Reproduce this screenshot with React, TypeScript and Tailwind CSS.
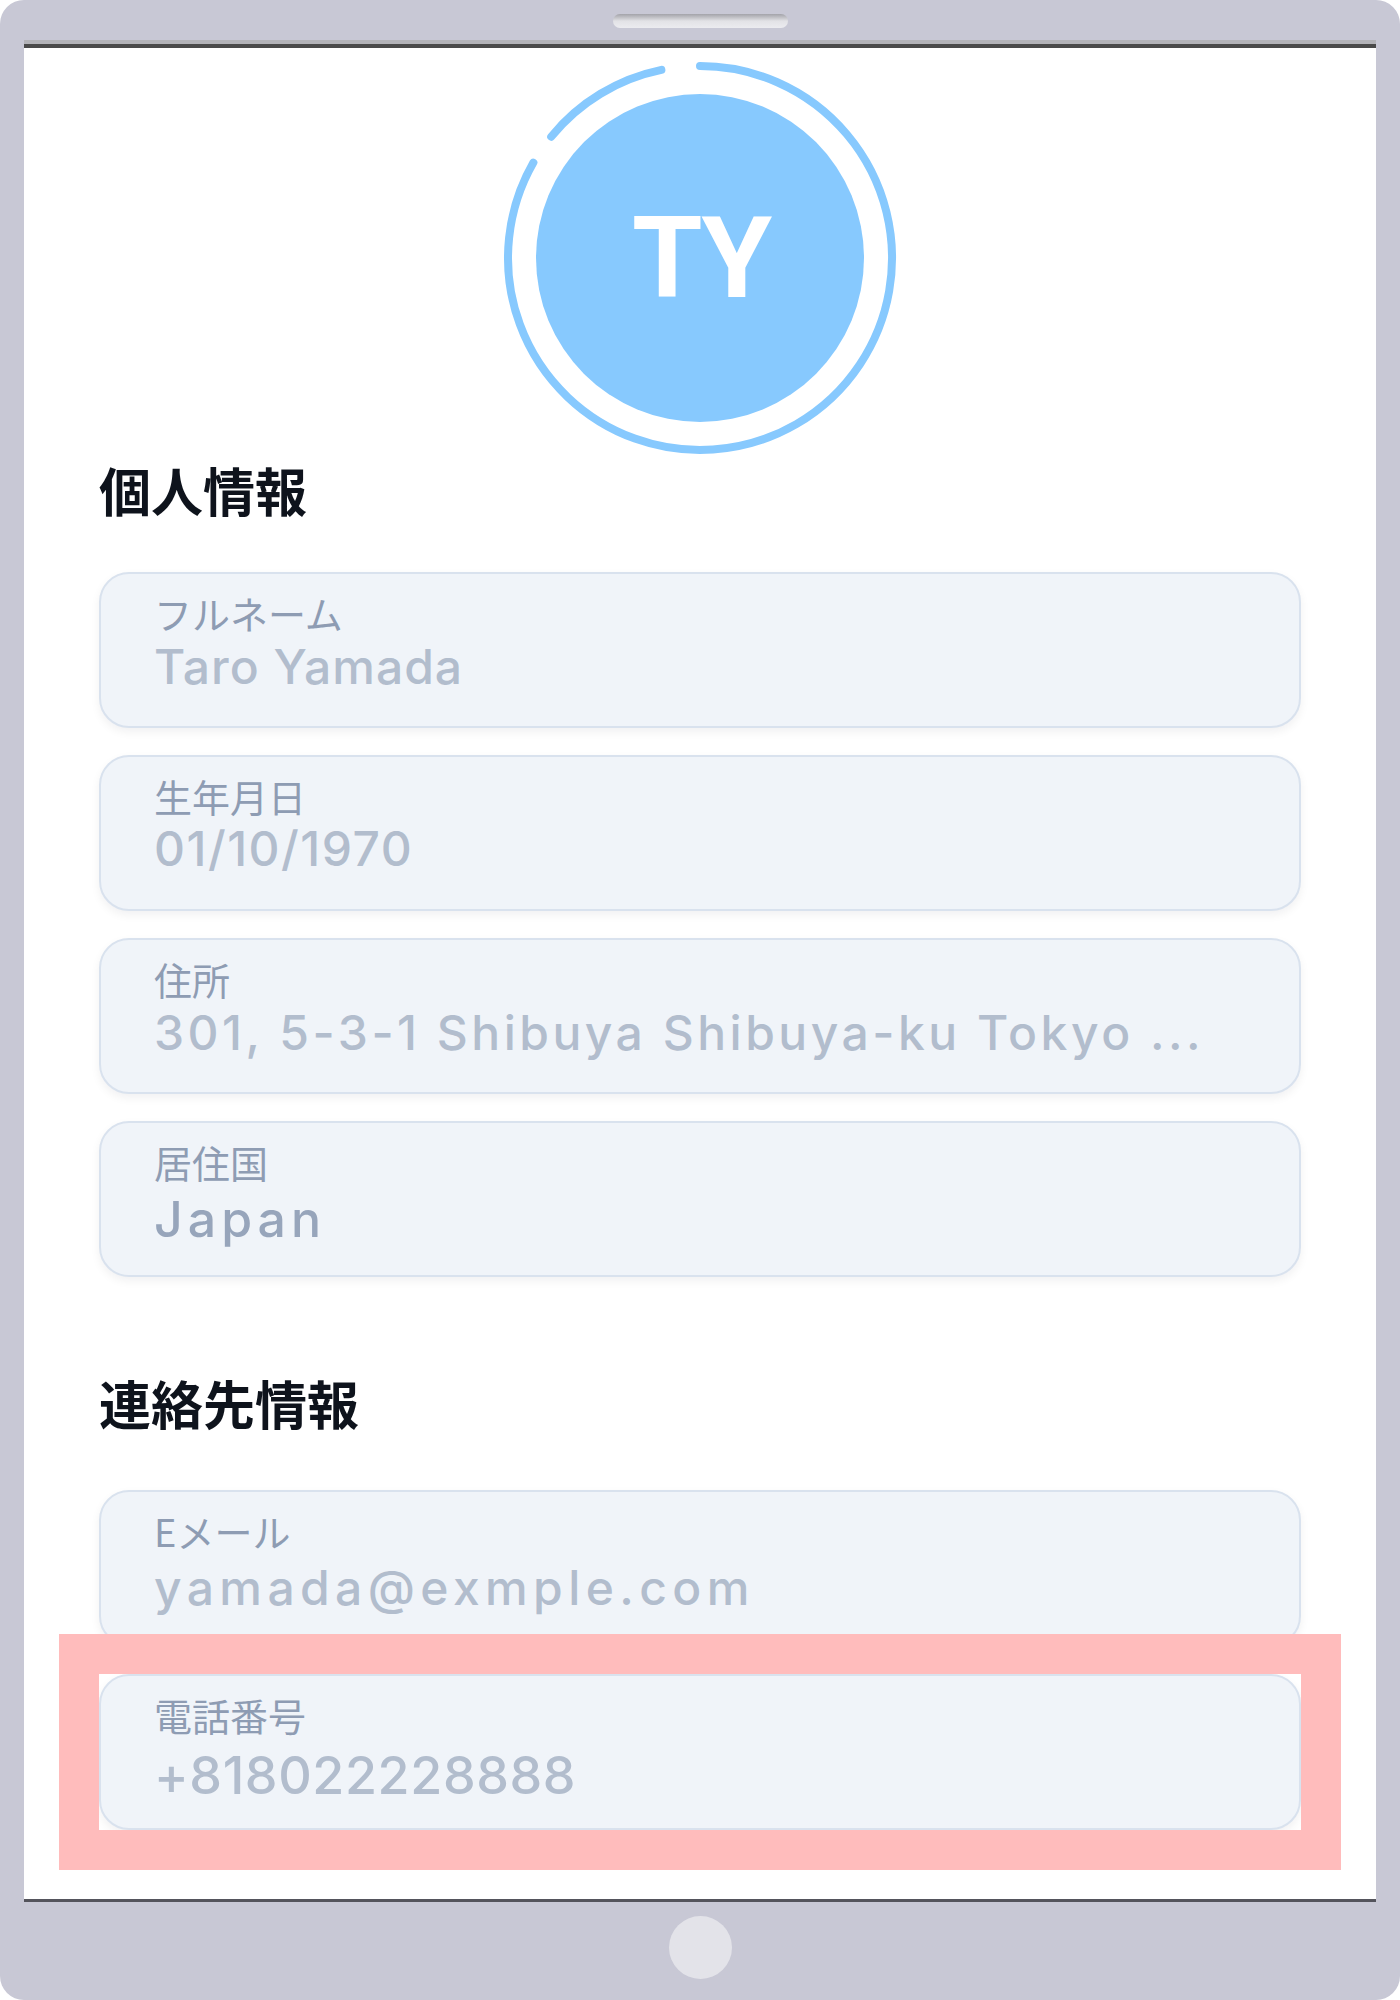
import React from 'react'

type Field = {
    label: string
    value: string
    valueClass: string
}

const personal: Field[] = [
    {
        label: 'フルネーム',
        value: 'Taro Yamada',
        valueClass: 'text-[48px] leading-[56px] mt-[4px] tracking-[1px] text-[#b2bdcd]',
    },
    {
        label: '生年月日',
        value: '01/10/1970',
        valueClass: 'text-[48px] leading-[56px] mt-[3px] tracking-[1.5px] text-[#b2bdcd]',
    },
    {
        label: '住所',
        value: '301, 5-3-1 Shibuya Shibuya-ku Tokyo ...',
        valueClass: 'text-[48px] leading-[56px] mt-[4px] tracking-[3.5px] text-[#b2bdcd] whitespace-nowrap',
    },
    {
        label: '居住国',
        value: 'Japan',
        valueClass: 'text-[50px] leading-[56px] mt-[7px] tracking-[5px] text-[#97a5bb]',
    },
]

const contact: Field[] = [
    {
        label: 'Eメール',
        value: 'yamada@exmple.com',
        valueClass: 'text-[48px] leading-[56px] mt-[7px] tracking-[5.4px] text-[#b2bdcd]',
    },
    {
        label: '電話番号',
        value: '+818022228888',
        valueClass: 'text-[52px] leading-[56px] mt-[11px] tracking-[0.6px] text-[#b2bdcd]',
    },
]

function InfoField({ field }: { field: Field }) {
    return (
        <div className="h-[156px] rounded-[30px] border-2 border-[#d9e2ee] bg-[#f0f4f9] pl-[53px] pt-[17px] shadow-[0_4px_10px_rgba(15,23,42,0.06)]">
            <div className="font-['Noto_Sans_CJK_JP',sans-serif] text-[38px] leading-[44px] text-[#8e9cb3]">
                {field.label}
            </div>
            <div className={`font-['Inter',sans-serif] font-medium ${field.valueClass}`}>{field.value}</div>
        </div>
    )
}

function Avatar() {
    return (
        <div className="relative mx-auto mt-[10px] h-[400px] w-[400px]">
            <svg viewBox="0 0 400 400" className="absolute inset-0 h-full w-full">
                <circle cx="200" cy="200" r="164" fill="#87c9fe" />
                <path
                    d="M200 8 A192 192 0 1 1 33.4 104.6"
                    fill="none"
                    stroke="#87c9fe"
                    strokeWidth="8"
                    strokeLinecap="round"
                />
                <path
                    d="M51.2 78.7 A192 192 0 0 1 161.4 11.9"
                    fill="none"
                    stroke="#87c9fe"
                    strokeWidth="8"
                    strokeLinecap="round"
                />
            </svg>
            <div className="absolute inset-0 flex items-center justify-center pl-[3px]">
                <span className="font-['Roboto',sans-serif] text-[114px] font-bold leading-none tracking-[-1px] text-white [font-kerning:none]">
                    TY
                </span>
            </div>
        </div>
    )
}

export default function App() {
    return (
        <div className="flex h-[2000px] w-[1400px] flex-col overflow-hidden rounded-[24px] bg-[#c8c8d5]">
            {/* top bezel */}
            <div className="flex h-[40px] justify-center pt-[14px]">
                <div className="h-[14px] w-[175px] rounded-full bg-linear-to-b from-[#a3a3a9] via-[#e2e2e6] to-[#ececf0]" />
            </div>

            <div className="mx-[24px] flex flex-1 flex-col">
                <div className="h-[4px] bg-[#b3b3b8]" />
                <div className="h-[4px] bg-[#4a4a4a]" />

                {/* screen */}
                <div className="relative flex-1 bg-white px-[75px]">
                    <Avatar />

                    <h2 className="mt-[6px] font-['Noto_Sans_CJK_JP',sans-serif] text-[52px] font-bold leading-[52px] text-[#0e131c]">
                        個人情報
                    </h2>

                    <div className="mt-[56px] flex flex-col gap-[27px]">
                        {personal.map((f) => (
                            <InfoField key={f.label} field={f} />
                        ))}
                    </div>

                    <h2 className="mt-[100px] font-['Noto_Sans_CJK_JP',sans-serif] text-[52px] font-bold leading-[52px] text-[#0e131c]">
                        連絡先情報
                    </h2>

                    <div className="mt-[61px] flex flex-col gap-[28px]">
                        <InfoField field={contact[0]} />
                        <div className="relative">
                            <InfoField field={contact[1]} />
                            {/* highlight frame */}
                            <div className="pointer-events-none absolute -inset-[40px] border-[40px] border-[#ffbcbc]" />
                        </div>
                    </div>
                </div>

                <div className="h-[3px] bg-[#54545c]" />
            </div>

            {/* bottom bezel */}
            <div className="flex h-[98px] justify-center pt-[14px]">
                <div className="h-[63px] w-[63px] rounded-full bg-[#e3e3e9]" />
            </div>
        </div>
    )
}
